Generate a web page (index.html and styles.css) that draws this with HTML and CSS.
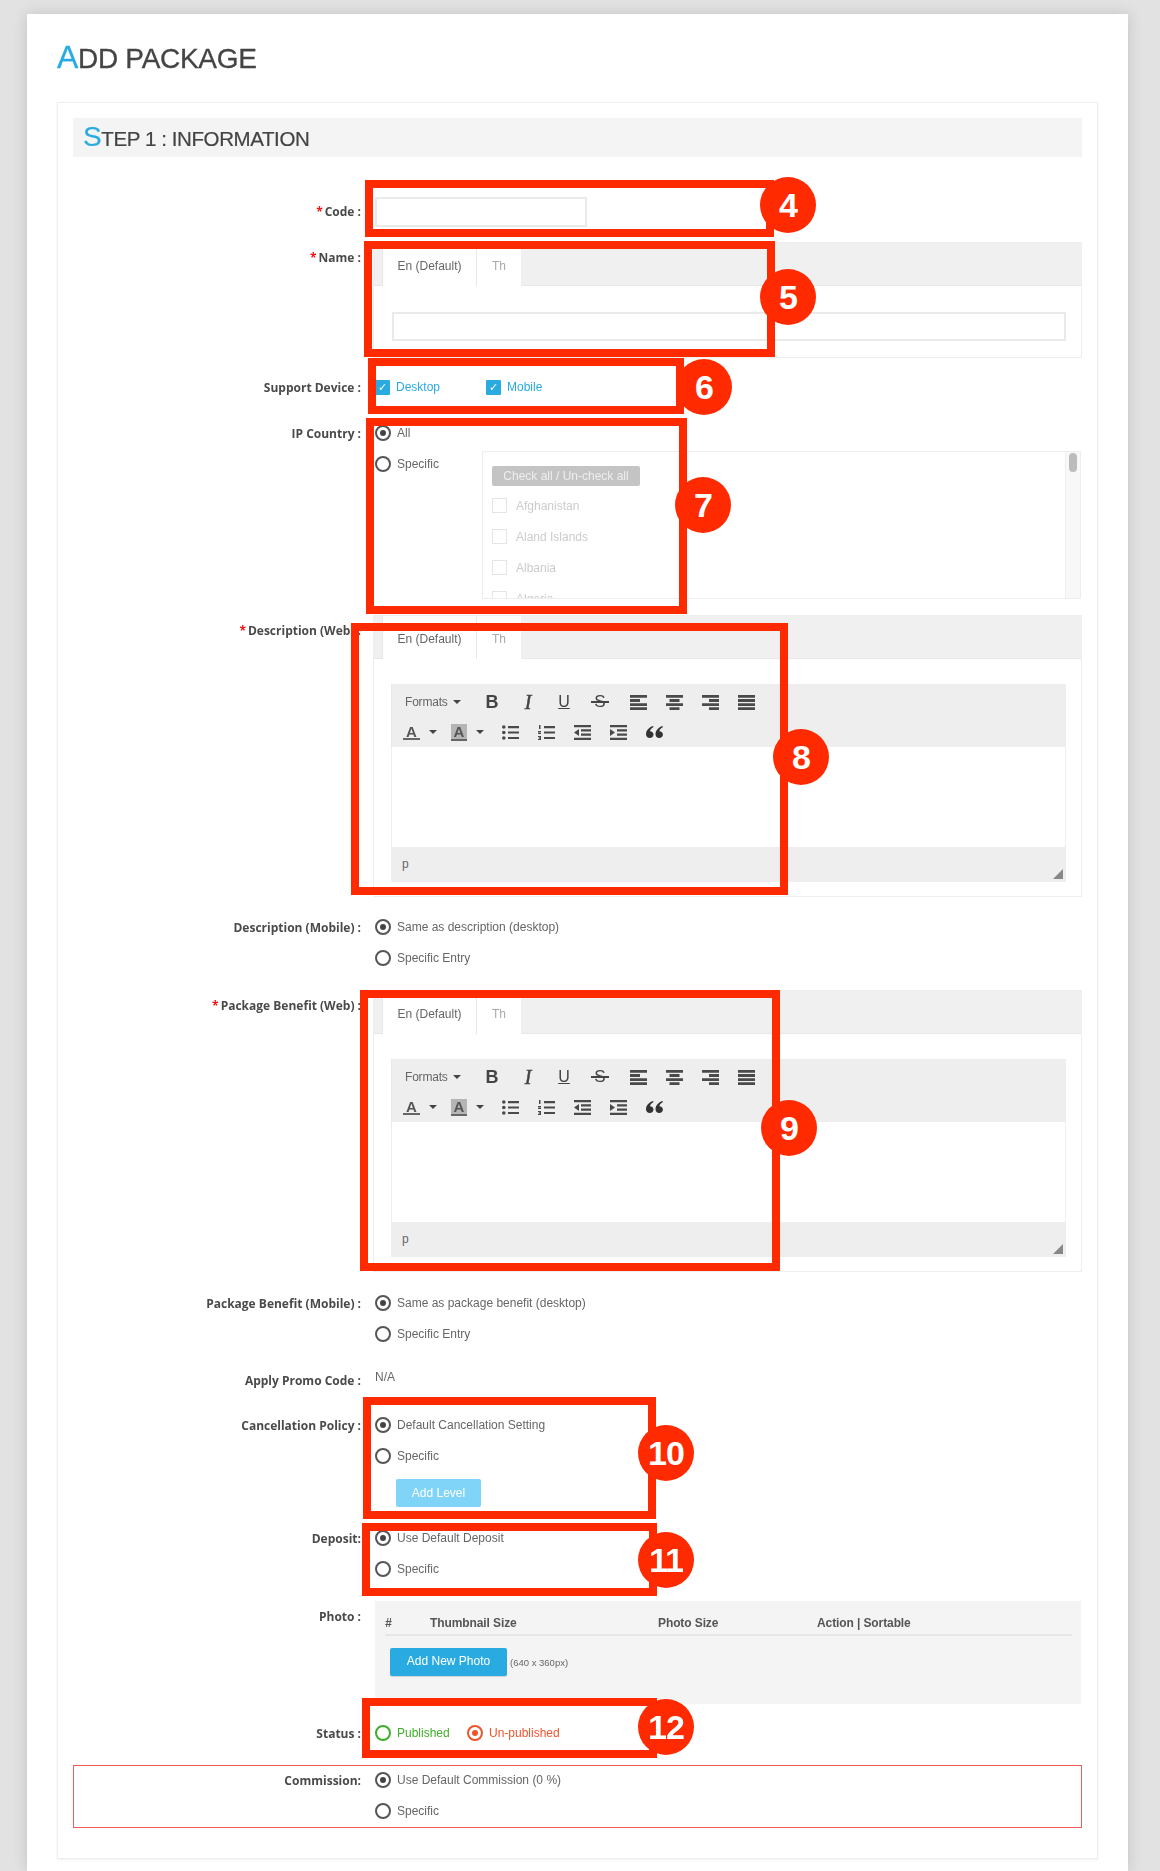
FILE: index.html
```html
<!DOCTYPE html>
<html lang="en">
<head>
<meta charset="utf-8">
<title>Add Package</title>
<link rel="stylesheet" href="styles.css">
</head>
<body>
<svg class="defs" aria-hidden="true">
  <symbol id="al" viewBox="0 0 17 15"><path d="M0 0h17v2.800H0zM0 4.100h10v2.800H0zM0 8.200h17v2.800H0zM0 12.200h17V15H0z"/></symbol>
  <symbol id="ac" viewBox="0 0 17 15"><path d="M0 0h17v2.800H0zM3.500 4.100h10v2.800h-10zM0 8.200h17v2.800H0zM3.500 12.200h10V15h-10z"/></symbol>
  <symbol id="ar" viewBox="0 0 17 15"><path d="M0 0h17v2.800H0zM7 4.100h10v2.800H7zM0 8.200h17v2.800H0zM7 12.200h10V15H7z"/></symbol>
  <symbol id="aj" viewBox="0 0 17 15"><path d="M0 0h17v2.800H0zM0 4.100h17v2.800H0zM0 8.200h17v2.800H0zM0 12.200h17V15H0z"/></symbol>
  <symbol id="ul" viewBox="0 0 17 15"><circle cx="1.800" cy="2" r="1.800"/><circle cx="1.800" cy="7.500" r="1.800"/><circle cx="1.800" cy="13" r="1.800"/><path d="M6 1h11v2.200H6zM6 6.400h11v2.200H6zM6 11.900h11v2.200H6z"/></symbol>
  <symbol id="ol" viewBox="0 0 17 15"><path d="M1 0h1.500v4H1zM0 6h3v1.200H1.600v.6H3V9H0V7.800h1.400v-.6H0zM0 11h3v4H0v-1h1.600v-.5H.6v-.9h1V12H0z"/><path d="M6 1h11v2.200H6zM6 6.400h11v2.200H6zM6 11.900h11v2.200H6z"/></symbol>
  <symbol id="od" viewBox="0 0 17 15"><path d="M0 0h17v2.200H0zM7 4.300h10v2.200H7zM7 8.600h10v2.200H7zM0 12.800h17V15H0zM5 4v7L0 7.500z"/></symbol>
  <symbol id="id" viewBox="0 0 17 15"><path d="M0 0h17v2.200H0zM7 4.300h10v2.200H7zM7 8.600h10v2.200H7zM0 12.800h17V15H0zM0 4v7l5-3.500z"/></symbol>
  <symbol id="qt" viewBox="0 0 17 12"><path d="M3.800 12C1.600 12 0 10.600 0 8.300 0 4.600 3 1.200 7 0l.6 1.100C5.400 2.200 4.200 3.800 4 5.200c2 0 3.500 1.300 3.500 3.200C7.500 10.500 5.900 12 3.800 12zM13.300 12c-2.200 0-3.800-1.400-3.800-3.700 0-3.700 3-7.100 7-8.300l.5 1.100c-2.200 1.100-3.400 2.700-3.600 4.100 2 0 3.500 1.300 3.500 3.200 0 2.100-1.500 3.600-3.600 3.600z"/></symbol>
</svg>

<div class="page">
  <main class="card">
    <h1 class="title"><span class="cap">A</span>DD PACKAGE</h1>
    <section class="panel">
      <h2 class="step"><span class="cap">S</span>TEP 1 : INFORMATION</h2>

      <div class="row row-code">
        <label class="label label-input"><span class="req">*</span>Code :</label>
        <div class="field"><input class="input input-code" type="text"></div>
      </div>

      <div class="row row-name">
        <label class="label label-box"><span class="req">*</span>Name :</label>
        <div class="box box-name">
          <div class="tabs"><span class="tab tab-on">En (Default)</span><span class="tab tab-off">Th</span></div>
          <div class="name-pane"><input class="input input-name" type="text"></div>
        </div>
      </div>

      <div class="row row-device">
        <label class="label label-device">Support Device :</label>
        <div class="devices">
          <span class="device device-a"><span class="check">&#10003;</span>Desktop</span>
          <span class="device"><span class="check">&#10003;</span>Mobile</span>
        </div>
      </div>

      <div class="row row-ip">
        <label class="label label-radio">IP Country :</label>
        <div class="field">
          <div class="radio-line"><span class="radio on"></span>All</div>
          <div class="ip-specific">
            <div class="radio-line ip-radio"><span class="radio"></span>Specific</div>
            <div class="countries">
              <div class="countries-inner">
                <span class="check-all">Check all / Un-check all</span>
                <div class="country"><span class="cbox"></span>Afghanistan</div>
                <div class="country"><span class="cbox"></span>Aland Islands</div>
                <div class="country"><span class="cbox"></span>Albania</div>
                <div class="country"><span class="cbox"></span>Algeria</div>
              </div>
              <div class="scroll"><span class="thumb"></span></div>
            </div>
          </div>
        </div>
      </div>

      <div class="row row-desc">
        <label class="label label-box"><span class="req">*</span>Description (Web) :</label>
        <div class="box box-editor">
          <div class="tabs"><span class="tab tab-on">En (Default)</span><span class="tab tab-off">Th</span></div>
          <div class="editor">
            <div class="toolbar">
              <div class="tool-row">
                <span class="formats">Formats<i class="caret"></i></span>
                <span class="tb"><b class="g-b">B</b></span>
                <span class="tb"><i class="g-i">I</i></span>
                <span class="tb"><span class="g-u">U</span></span>
                <span class="tb tb-s"><span class="g-s">S</span></span>
                <span class="tb"><svg class="ic"><use href="#al"/></svg></span>
                <span class="tb"><svg class="ic"><use href="#ac"/></svg></span>
                <span class="tb"><svg class="ic"><use href="#ar"/></svg></span>
                <span class="tb"><svg class="ic"><use href="#aj"/></svg></span>
              </div>
              <div class="tool-row">
                <span class="split split-a"><span class="g-a">A</span><i class="caret"></i></span>
                <span class="split split-b"><span class="g-a g-bg">A</span><i class="caret"></i></span>
                <span class="tb"><svg class="ic"><use href="#ul"/></svg></span>
                <span class="tb"><svg class="ic"><use href="#ol"/></svg></span>
                <span class="tb"><svg class="ic"><use href="#od"/></svg></span>
                <span class="tb"><svg class="ic"><use href="#id"/></svg></span>
                <span class="tb"><svg class="ic ic-q"><use href="#qt"/></svg></span>
              </div>
            </div>
            <div class="edit-area"></div>
            <div class="statusbar">p<span class="grip"></span></div>
          </div>
        </div>
      </div>

      <div class="row row-dm">
        <label class="label label-radio">Description (Mobile) :</label>
        <div class="field">
          <div class="radio-line"><span class="radio on"></span>Same as description (desktop)</div>
          <div class="radio-line"><span class="radio"></span>Specific Entry</div>
        </div>
      </div>

      <div class="row row-pb">
        <label class="label label-box"><span class="req">*</span>Package Benefit (Web) :</label>
        <div class="box box-editor">
          <div class="tabs"><span class="tab tab-on">En (Default)</span><span class="tab tab-off">Th</span></div>
          <div class="editor">
            <div class="toolbar">
              <div class="tool-row">
                <span class="formats">Formats<i class="caret"></i></span>
                <span class="tb"><b class="g-b">B</b></span>
                <span class="tb"><i class="g-i">I</i></span>
                <span class="tb"><span class="g-u">U</span></span>
                <span class="tb tb-s"><span class="g-s">S</span></span>
                <span class="tb"><svg class="ic"><use href="#al"/></svg></span>
                <span class="tb"><svg class="ic"><use href="#ac"/></svg></span>
                <span class="tb"><svg class="ic"><use href="#ar"/></svg></span>
                <span class="tb"><svg class="ic"><use href="#aj"/></svg></span>
              </div>
              <div class="tool-row">
                <span class="split split-a"><span class="g-a">A</span><i class="caret"></i></span>
                <span class="split split-b"><span class="g-a g-bg">A</span><i class="caret"></i></span>
                <span class="tb"><svg class="ic"><use href="#ul"/></svg></span>
                <span class="tb"><svg class="ic"><use href="#ol"/></svg></span>
                <span class="tb"><svg class="ic"><use href="#od"/></svg></span>
                <span class="tb"><svg class="ic"><use href="#id"/></svg></span>
                <span class="tb"><svg class="ic ic-q"><use href="#qt"/></svg></span>
              </div>
            </div>
            <div class="edit-area"></div>
            <div class="statusbar">p<span class="grip"></span></div>
          </div>
        </div>
      </div>

      <div class="row row-pm">
        <label class="label label-radio">Package Benefit (Mobile) :</label>
        <div class="field">
          <div class="radio-line"><span class="radio on"></span>Same as package benefit (desktop)</div>
          <div class="radio-line"><span class="radio"></span>Specific Entry</div>
        </div>
      </div>

      <div class="row row-promo">
        <label class="label label-promo">Apply Promo Code :</label>
        <div class="field value">N/A</div>
      </div>

      <div class="row row-cancel">
        <label class="label label-radio">Cancellation Policy :</label>
        <div class="field">
          <div class="radio-line"><span class="radio on"></span>Default Cancellation Setting</div>
          <div class="radio-line"><span class="radio"></span>Specific</div>
          <span class="btn-level">Add Level</span>
        </div>
      </div>

      <div class="row row-deposit">
        <label class="label label-radio">Deposit:</label>
        <div class="field">
          <div class="radio-line"><span class="radio on"></span>Use Default Deposit</div>
          <div class="radio-line"><span class="radio"></span>Specific</div>
        </div>
      </div>

      <div class="row row-photo">
        <label class="label label-box">Photo :</label>
        <div class="photo">
          <div class="photo-head"><span class="ph-num">#</span><span class="ph-thumb">Thumbnail Size</span><span class="ph-size">Photo Size</span><span>Action | Sortable</span></div>
          <div class="photo-add"><span class="btn-photo">Add New Photo</span><small class="hint">(640 x 360px)</small></div>
        </div>
      </div>

      <div class="row row-status">
        <label class="label label-radio">Status :</label>
        <div class="status">
          <span class="st st-green"><span class="radio"></span>Published</span>
          <span class="st st-red"><span class="radio on"></span>Un-published</span>
        </div>
      </div>

      <div class="row row-commission">
        <label class="label label-radio">Commission:</label>
        <div class="field">
          <div class="radio-line"><span class="radio on"></span>Use Default Commission (0 %)</div>
          <div class="radio-line"><span class="radio"></span>Specific</div>
        </div>
      </div>
    </section>
  </main>

  <div class="frame f4"></div>
  <div class="frame f5"></div>
  <div class="frame f6"></div>
  <div class="frame f7"></div>
  <div class="frame f8"></div>
  <div class="frame f9"></div>
  <div class="frame f10"></div>
  <div class="frame f11"></div>
  <div class="frame f12"></div>
  <span class="num n4">4</span>
  <span class="num n5">5</span>
  <span class="num n6">6</span>
  <span class="num n7">7</span>
  <span class="num n8">8</span>
  <span class="num n9">9</span>
  <span class="num n10">10</span>
  <span class="num n11">11</span>
  <span class="num n12">12</span>
</div>
</body>
</html>
```
FILE: styles.css
```css
* { box-sizing: border-box; }
html, body { margin: 0; padding: 0; }
body {
  height: 1871px;
  overflow: hidden;
  background: #e2e2e2;
  font-family: "Liberation Sans", Arial, sans-serif;
  font-size: 12px;
  color: #666;
}
.defs { position: absolute; width: 0; height: 0; }
.page { position: relative; height: 1871px; padding: 14px 32px 0 27px; filter: blur(0.6px); }

.card {
  height: 1857px;
  padding: 28px 30px 0;
  background: #fff;
  box-shadow: 0 0 14px rgba(0, 0, 0, 0.14);
}
.title {
  margin: 0 0 29px;
  height: 31px;
  font-size: 28px;
  line-height: 31px;
  font-weight: 400;
  letter-spacing: -0.3px;
  color: #444;
  -webkit-text-stroke: 0.3px #444;
}
.title .cap { font-size: 32px; color: #29abe2; -webkit-text-stroke: 0.3px #29abe2; }
.panel {
  height: 1757px;
  padding: 15px 15px 0;
  border: 1px solid #eee;
  box-shadow: 0 1px 2px rgba(0, 0, 0, 0.06);
}
.step {
  margin: 0;
  height: 39px;
  padding-left: 10px;
  background: #f4f4f4;
  font-size: 20.500px;
  line-height: 37px;
  font-weight: 400;
  letter-spacing: -0.4px;
  color: #444;
  -webkit-text-stroke: 0.2px #444;
}
.step .cap { font-size: 28px; color: #29abe2; -webkit-text-stroke: 0.2px #29abe2; }

.row { display: grid; grid-template-columns: 288px 707px; column-gap: 14px; }
.label {
  display: block;
  text-align: right;
  font-family: "Open Sans", sans-serif;
  font-size: 12px;
  font-weight: 700;
  line-height: 16px;
  color: #4a4a4a;
  white-space: nowrap;
}
.req { color: #f01414; margin-right: 2px; }
.label-input { padding-top: 7px; }
.label-box { padding-top: 8px; }
.label-device { padding-top: 4px; }
.label-radio { padding-top: 1px; }
.label-promo { padding-top: 4px; }

.row-code { margin-top: 40px; }
.row-name { margin-top: 15px; }
.row-device { margin-top: 18px; height: 24px; }
.row-ip { margin-top: 25px; }
.row-desc { margin-top: 16px; }
.row-dm { margin-top: 22px; }
.row-pb { margin-top: 9px; }
.row-pm { margin-top: 23px; }
.row-promo { margin-top: 12px; height: 20px; }
.row-cancel { margin-top: 28px; }
.row-deposit { margin-top: 23px; }
.row-photo { margin-top: 9px; }
.row-status { margin-top: 21px; height: 16px; }
.row-commission {
  margin-top: 24px;
  height: 63px;
  padding-top: 6px;
  grid-template-columns: 287px 700px;
  border: 1px solid #f25a5a;
}

.input { display: block; height: 30px; padding: 0; background: #fff; border: 2px solid #eaeaea; border-radius: 0; outline: 0; }
.input-code { width: 212px; }
.input-name { width: 674px; height: 29px; }

.box { margin-left: -2px; width: 709px; border: 1px solid #eee; }
.box-name { height: 116px; }
.box-editor { height: 282px; }
.tabs { display: flex; height: 43px; padding-left: 8px; background: #f0f0f0; border-bottom: 1px solid #e8e8e8; }
.tab { display: flex; align-items: center; justify-content: center; height: 43px; padding-top: 2px; background: #fff; }
.tab-on { width: 95px; color: #666; border-left: 1px solid #e8e8e8; border-right: 1px solid #e8e8e8; }
.tab-off { width: 45px; color: #aaa; border-right: 1px solid #eee; }
.name-pane { padding: 26px 0 0 18px; }

.devices { display: flex; align-items: center; height: 22px; }
.device { display: flex; align-items: center; color: #29abe2; }
.device-a { width: 111px; }
.check {
  display: flex; align-items: center; justify-content: center;
  width: 15px; height: 15px; margin-right: 6px;
  background: #29abe2; border-radius: 1px;
  color: #fff; font-family: "DejaVu Sans", sans-serif; font-size: 11px; font-weight: 700;
}

.radio-line { display: flex; align-items: flex-start; height: 31px; line-height: 17px; white-space: nowrap; }
.radio { position: relative; flex: none; width: 16px; height: 16px; margin-right: 6px; border: 2px solid #555; border-radius: 50%; background: #fff; }
.radio.on::after { content: ""; position: absolute; left: 3px; top: 3px; width: 6px; height: 6px; border-radius: 50%; background: #444; }

.ip-specific { display: flex; }
.ip-radio { width: 107px; }
.countries {
  display: flex; margin-top: -5px; width: 599px; height: 148px; overflow: hidden;
  border: 1px solid #eee; color: #ccc;
}
.countries-inner { flex: 1; padding: 14px 0 0 9px; }
.check-all {
  display: block; width: 148px; height: 20px; margin-bottom: 12px;
  background: #c4c4c4; border-radius: 2px;
  color: #eee; line-height: 20px; text-align: center;
}
.country { display: flex; align-items: center; height: 15px; margin-bottom: 16px; }
.cbox { width: 15px; height: 15px; margin-right: 9px; border: 1px solid #e4e4e4; }
.scroll { width: 15px; padding: 1px 3px; background: #f8f8f8; border-left: 1px solid #eee; }
.thumb { display: block; width: 8px; height: 19px; background: #bcbcbc; border-radius: 4px; }

.editor { margin: 25px 15px 0 17px; }
.toolbar { height: 63px; padding-top: 3px; background: #eee; border-left: 1px solid #e8e8e8; }
.tool-row { display: flex; align-items: center; height: 30px; color: #444; }
.formats { display: flex; align-items: center; width: 82px; padding-left: 13px; color: #666; font-size: 12px; letter-spacing: -0.2px; }
.caret { display: inline-block; width: 0; height: 0; margin-left: 5px; border-left: 4px solid transparent; border-right: 4px solid transparent; border-top: 4px solid #444; }
.tb { display: flex; align-items: center; justify-content: center; width: 36px; height: 22px; }
.tb-s { margin-right: 2px; }
.g-b { font-size: 18px; color: #444; }
.g-i { font-family: "Liberation Serif", serif; font-size: 20px; font-weight: 400; color: #444; -webkit-text-stroke: 0.5px #444; }
.g-u { font-size: 16px; line-height: 18px; text-decoration: underline; color: #444; }
.g-s { position: relative; font-size: 17px; color: #444; }
.g-s::after { content: ""; position: absolute; left: -3px; right: -3px; top: 9px; height: 1.500px; background: #444; }
.ic { width: 17px; height: 15px; fill: #4a4a4a; }
.ic-q { height: 12px; fill: #333; }
.split { display: flex; align-items: center; width: 50px; }
.split-a { padding-left: 11px; }
.split-b { padding-left: 9px; }
.split .caret { margin-left: 9px; }
.g-a { display: block; width: 17px; height: 16px; line-height: 15px; font-size: 15px; font-weight: 700; text-align: center; color: #555; border-bottom: 2px solid #666; }
.g-bg { background: #b5b5b5; height: 17px; width: 16px; }
.edit-area { height: 100px; background: #fff; border-left: 1px solid #eee; border-right: 1px solid #eee; }
.statusbar { position: relative; height: 35px; padding-left: 11px; background: #eee; line-height: 34px; color: #666; }
.grip {
  position: absolute; right: 3px; bottom: 3px; width: 10px; height: 10px;
  background: #888; clip-path: polygon(100% 0, 100% 100%, 0 100%);
}

.value { line-height: 16px; }
.btn-level {
  display: block; width: 85px; height: 28px; margin-left: 21px;
  background: #7fd4f7; border-radius: 2px; color: #fff; line-height: 28px; text-align: center;
}

.photo { width: 706px; height: 103px; padding: 8px 9px 0 10px; background: #f4f4f4; }
.photo-head {
  display: flex; height: 27px; border-bottom: 2px solid #e6e6e6;
  font-size: 12px; font-weight: 700; line-height: 28px; color: #555; letter-spacing: -0.1px;
}
.ph-num { width: 45px; font-style: italic; }
.ph-thumb { width: 228px; }
.ph-size { width: 159px; }
.photo-add { display: flex; align-items: center; padding: 12px 0 0 5px; }
.btn-photo {
  width: 117px; height: 28px; background: #29abe2; border-radius: 2px;
  color: #fff; line-height: 26px; text-align: center; box-shadow: 0 1px 1px rgba(0, 0, 0, 0.15);
}
.hint { margin-left: 3px; font-size: 9.500px; color: #666; }

.status { display: flex; }
.st { display: flex; line-height: 17px; }
.st-green { width: 92px; color: #3fae2a; }
.st-green .radio { border-color: #3fae2a; }
.st-red { color: #f0542c; }
.st-red .radio { border-color: #f0542c; }
.st-red .radio.on::after { background: #f0542c; }

.frame { position: absolute; border: 8px solid #ff2a00; }
.f4 { left: 365px; top: 180px; width: 409px; height: 57px; }
.f5 { left: 364px; top: 241px; width: 411px; height: 116px; }
.f6 { left: 368px; top: 358px; width: 316px; height: 56px; }
.f7 { left: 366px; top: 418px; width: 321px; height: 196px; }
.f8 { left: 351px; top: 623px; width: 437px; height: 272px; }
.f9 { left: 360px; top: 990px; width: 420px; height: 281px; }
.f10 { left: 363px; top: 1397px; width: 293px; height: 122px; }
.f11 { left: 362px; top: 1523px; width: 295px; height: 73px; }
.f12 { left: 362px; top: 1698px; width: 295px; height: 60px; }

.num {
  position: absolute; width: 56px; height: 56px; border-radius: 50%;
  background: #ff2a00; color: #fff;
  font-size: 34px; font-weight: 700; line-height: 56px; letter-spacing: -1px; text-align: center;
}
.n4 { left: 760px; top: 177px; }
.n5 { left: 760px; top: 269px; }
.n6 { left: 676px; top: 359px; }
.n7 { left: 675px; top: 477px; }
.n8 { left: 773px; top: 729px; }
.n9 { left: 761px; top: 1100px; }
.n10 { left: 638px; top: 1425px; }
.n11 { left: 638px; top: 1532px; }
.n12 { left: 638px; top: 1699px; }
```
